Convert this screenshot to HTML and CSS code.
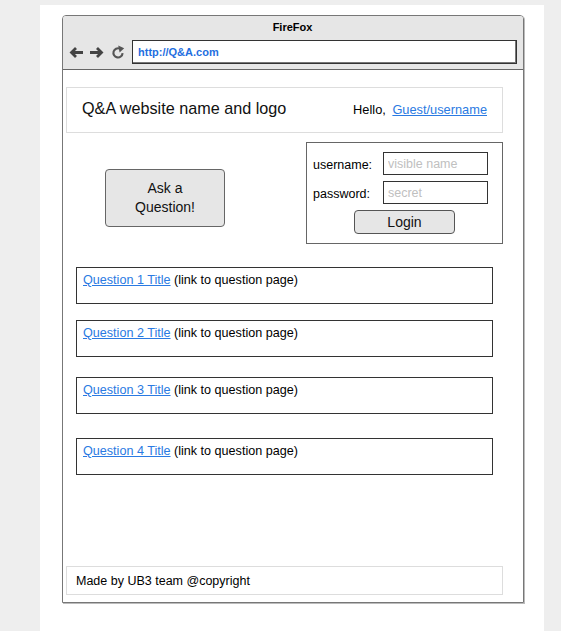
FILE: index.html
```html
<!DOCTYPE html>
<html lang="en">
<head>
<meta charset="utf-8">
<title>Q&amp;A mockup</title>
<link rel="stylesheet" href="styles.css">
</head>
<body>
<div class="panel">
  <div class="browser">
    <div class="chrome">
      <div class="title">FireFox</div>
      <div class="nav">
        <svg class="icon" width="16" height="16" viewBox="0 0 16 16"><path d="M15 8.5H3.5M8 4L3.5 8.5L8 13" fill="none" stroke="#444" stroke-width="2.8" stroke-linecap="butt"/></svg>
        <svg class="icon" width="16" height="16" viewBox="0 0 16 16"><path d="M1 8.5H12.5M8 4L12.5 8.5L8 13" fill="none" stroke="#444" stroke-width="2.8" stroke-linecap="butt"/></svg>
        <svg class="icon" width="16" height="16" viewBox="0 0 16 16"><path d="M12.6 9.2A4.6 4.6 0 1 1 9.8 4.6" fill="none" stroke="#555" stroke-width="2.1"/><path d="M8.2 1.6L14.2 4.2L9.6 8.6Z" fill="#555"/></svg>
        <div class="url">http://Q&amp;A.com</div>
      </div>
    </div>
    <div class="content">
      <div class="site-header">
        <span class="site-name">Q&amp;A website name and logo</span>
        <span class="hello">Hello, <a href="#" class="link user-link">Guest/username</a></span>
      </div>
      <div class="top-row">
        <button class="ask-btn">Ask a<br>Question!</button>
        <div class="login-box">
          <div class="field"><label>username:</label><input type="text" placeholder="visible name"></div>
          <div class="field"><label>password:</label><input type="text" placeholder="secret"></div>
          <button class="login-btn">Login</button>
        </div>
      </div>
      <div class="questions">
        <div class="question"><a href="#" class="link">Question 1 Title</a> (link to question page)</div>
        <div class="question"><a href="#" class="link">Question 2 Title</a> (link to question page)</div>
        <div class="question"><a href="#" class="link">Question 3 Title</a> (link to question page)</div>
        <div class="question"><a href="#" class="link">Question 4 Title</a> (link to question page)</div>
      </div>
      <div class="footer">Made by UB3 team @copyright</div>
    </div>
  </div>
</div>
</body>
</html>
```
FILE: styles.css
```css
* { box-sizing: border-box; }
html, body { margin: 0; padding: 0; }
body {
  background: #eeeeee;
  font-family: "Liberation Sans", Arial, sans-serif;
  color: #000;
  height: 631px;
  overflow: hidden;
}
.panel {
  margin-left: 40px;
  margin-top: 5px;
  width: 504px;
  height: 626px;
  background: #fff;
  padding-top: 10px;
  padding-left: 22px;
}
.browser {
  width: 462px;
  height: 588px;
  border: 1px solid #777;
  border-radius: 4px 4px 0 0;
  display: flex;
  flex-direction: column;
  box-shadow: 1px 1px 0 #bbb;
}
.chrome {
  background: #e6e6e6;
  border-bottom: 1px solid #666;
  padding: 0 6px 5px 5px;
  border-radius: 3px 3px 0 0;
}
.title {
  text-align: center;
  font-weight: bold;
  font-size: 11px;
  line-height: 13px;
  padding-top: 5px;
  padding-bottom: 6px;
}
.nav {
  display: flex;
  align-items: center;
  gap: 5px;
  height: 24px;
}
.icon { flex: none; }
.url {
  flex: 1;
  margin-left: 1px;
  height: 24px;
  background: #fff;
  border: 1px solid #333;
  box-shadow: inset -1px -1px 0 #777;
  color: #1f6fe0;
  font-weight: bold;
  font-size: 11px;
  line-height: 22px;
  padding-left: 5px;
}
.content {
  flex: 1;
  display: flex;
  flex-direction: column;
  padding: 17px 0 7px 3px;
}
.site-header {
  width: 437px;
  height: 46px;
  border: 1px solid #dddddd;
  display: flex;
  align-items: baseline;
  justify-content: space-between;
  padding: 10px 15px 0 15px;
  line-height: 20px;
}
.site-name {
  font-size: 16.2px;
  color: #111;
}
.hello {
  font-size: 12.8px;
}
.user-link { margin-left: 3px; }
.link {
  color: #2a7ae2;
  text-decoration: underline;
}
.top-row {
  display: flex;
  justify-content: space-between;
  align-items: flex-start;
  margin-top: 9px;
  width: 437px;
}
.ask-btn {
  margin-left: 39px;
  margin-top: 27px;
  width: 120px;
  height: 58px;
  background: #e6e6e6;
  border: 1px solid #666;
  border-radius: 4px;
  font-family: "Liberation Sans", Arial, sans-serif;
  font-size: 14px;
  line-height: 19px;
  color: #111;
  padding: 0;
}
.login-box {
  width: 197px;
  height: 102px;
  border: 1px solid #666;
  padding: 9px 0 9px 6px;
  display: flex;
  flex-direction: column;
  gap: 6px;
  font-size: 12.5px;
}
.field {
  display: flex;
  align-items: center;
  height: 23px;
}
.field label {
  width: 70px;
  padding-top: 2px;
}
.field input {
  width: 105px;
  height: 23px;
  border: 1px solid #333;
  font-family: "Liberation Sans", Arial, sans-serif;
  font-size: 12.5px;
  padding: 0 4px;
  margin: 0;
  outline: none;
}
.field input::placeholder { color: #c0c0c0; }
.login-btn {
  align-self: center;
  margin-left: -6px;
  width: 101px;
  height: 24px;
  background: #e6e6e6;
  border: 1px solid #555;
  border-radius: 4px;
  font-family: "Liberation Sans", Arial, sans-serif;
  font-size: 14px;
  color: #111;
  padding: 0;
}
.questions {
  margin-left: 10px;
  margin-top: 23px;
  display: flex;
  flex-direction: column;
}
.question {
  width: 417px;
  height: 37px;
  border: 1px solid #333;
  font-size: 12.6px;
  line-height: 15px;
  padding: 5px 6px 0;
}
.question:nth-child(2) { margin-top: 16px; }
.question:nth-child(3) { margin-top: 20px; }
.question:nth-child(4) { margin-top: 24px; }
.footer {
  margin-top: auto;
  width: 437px;
  height: 29px;
  border: 1px solid #dddddd;
  font-size: 12.5px;
  display: flex;
  align-items: center;
  padding-left: 9px;
}
```
